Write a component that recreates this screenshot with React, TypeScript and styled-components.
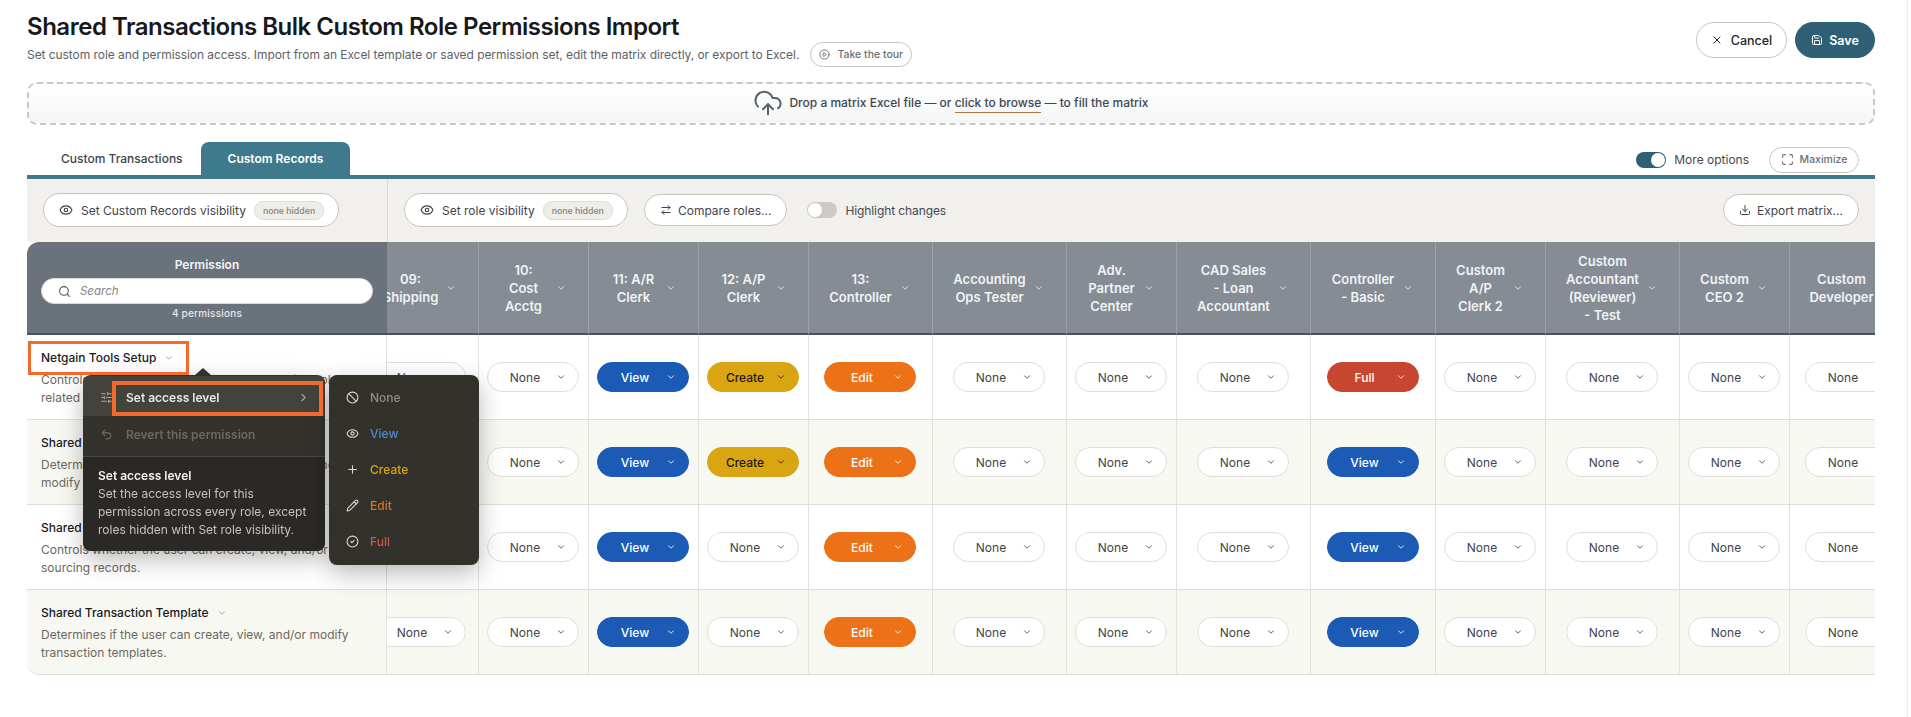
import React, { useLayoutEffect, useRef } from 'react';
import styled, { createGlobalStyle } from 'styled-components';
import {
    Ban, ChevronDown, ChevronRight, CirclePlay, CircleCheck, CloudUpload, Download, Eye,
    ArrowRightLeft, Maximize, Pencil, Plus, Save, Search, SlidersHorizontal, Undo2, X,
} from 'lucide-react';

type Access = 'None' | 'View' | 'Create' | 'Edit' | 'Full';
type ReactIcon = typeof Ban;

const ROLES: { lines: string[]; width: number }[] = [
    { lines: ['09:', 'Shipping'], width: 116 },
    { lines: ['10:', 'Cost', 'Acctg'], width: 110 },
    { lines: ['11: A/R', 'Clerk'], width: 110 },
    { lines: ['12: A/P', 'Clerk'], width: 110 },
    { lines: ['13:', 'Controller'], width: 124 },
    { lines: ['Accounting', 'Ops Tester'], width: 134 },
    { lines: ['Adv.', 'Partner', 'Center'], width: 110 },
    { lines: ['CAD Sales', '- Loan', 'Accountant'], width: 134 },
    { lines: ['Controller', '- Basic'], width: 125 },
    { lines: ['Custom', 'A/P', 'Clerk 2'], width: 110 },
    { lines: ['Custom', 'Accountant', '(Reviewer)', '- Test'], width: 134 },
    { lines: ['Custom', 'CEO 2'], width: 110 },
    { lines: ['Custom', 'Developer'], width: 124 },
];

const PERMISSIONS: { title: string; body: string; levels: Record<number, Access> }[] = [
    {
        title: 'Netgain Tools Setup',
        body: 'Controls whether the user can access Netgain Tools, related setup records.',
        levels: { 2: 'View', 3: 'Create', 4: 'Edit', 8: 'Full' },
    },
    {
        title: 'Shared Transaction Approval',
        body: 'Determines if the user can create, view, submit, and/or modify shared approvals.',
        levels: { 2: 'View', 3: 'Create', 4: 'Edit', 8: 'View' },
    },
    {
        title: 'Shared Transaction Sourcing',
        body: 'Controls whether the user can create, view, and/or sourcing records.',
        levels: { 2: 'View', 4: 'Edit', 8: 'View' },
    },
    {
        title: 'Shared Transaction Template',
        body: 'Determines if the user can create, view, and/or modify transaction templates.',
        levels: { 2: 'View', 4: 'Edit', 8: 'View' },
    },
];

const ACCESS_STYLE: Record<Access, { bg: string; fg: string; line: string; menu: string }> = {
    None: { bg: '#ffffff', fg: '#3f444b', line: '#e0ded8', menu: '#8f8d87' },
    View: { bg: '#1b5ab5', fg: '#ffffff', line: '#1b5ab5', menu: '#4f8ad0' },
    Create: { bg: '#d9a512', fg: '#1d1a10', line: '#d9a512', menu: '#d9a514' },
    Edit: { bg: '#ec7117', fg: '#ffffff', line: '#ec7117', menu: '#e0701c' },
    Full: { bg: '#c74632', fg: '#ffffff', line: '#c74632', menu: '#c8574a' },
};

const ACCESS_ICONS: { level: Access; icon: ReactIcon }[] = [
    { level: 'None', icon: Ban },
    { level: 'View', icon: Eye },
    { level: 'Create', icon: Plus },
    { level: 'Edit', icon: Pencil },
    { level: 'Full', icon: CircleCheck },
];

export default function App() {
    const scroller = useRef<HTMLDivElement>(null);

    useLayoutEffect(() => {
        if (scroller.current) scroller.current.scrollLeft = 24;
    }, []);

    return <Page>
        <GlobalStyle />
        <Header>
            <div>
                <Title>Shared Transactions Bulk Custom Role Permissions Import</Title>
                <SubRow>
                    <Subtitle>Set custom role and permission access. Import from an Excel template or saved permission set, edit the matrix directly, or export to Excel.</Subtitle>
                    <TourButton><CirclePlay size={11} /> Take the tour</TourButton>
                </SubRow>
            </div>
            <Actions>
                <CancelButton><X size={12} /> Cancel</CancelButton>
                <SaveButton><Save size={12} /> Save</SaveButton>
            </Actions>
        </Header>

        <DropZone>
            <CloudUpload size={30} strokeWidth={1.6} color="#56616e" />
            <span>Drop a matrix Excel file — or <BrowseLink>click to browse</BrowseLink> — to fill the matrix</span>
        </DropZone>

        <TabRow>
            <TabList>
                <Tab>Custom Transactions</Tab>
                <Tab $active>Custom Records</Tab>
            </TabList>
            <TabTools>
                <Toggle $on />
                <ToggleLabel>More options</ToggleLabel>
                <MaximizeButton><Maximize size={13} /> Maximize</MaximizeButton>
            </TabTools>
        </TabRow>

        <Toolbar>
            <ToolbarLeft>
                <VisibilityButton>
                    <Eye size={14} /> Set Custom Records visibility <Chip>none hidden</Chip>
                </VisibilityButton>
            </ToolbarLeft>
            <ToolbarRight>
                <VisibilityButton>
                    <Eye size={14} /> Set role visibility <Chip>none hidden</Chip>
                </VisibilityButton>
                <ToolButton><ArrowRightLeft size={12} /> Compare roles...</ToolButton>
                <HighlightToggle>
                    <Toggle />
                    <ToggleLabel>Highlight changes</ToggleLabel>
                </HighlightToggle>
                <ExportButton><Download size={12} /> Export matrix...</ExportButton>
            </ToolbarRight>
        </Toolbar>

        <MatrixArea>
            <Scroller ref={scroller}>
                <Matrix>
                    <colgroup>
                        <col width={360} />
                        {ROLES.map(role => <col key={role.lines.join()} width={role.width} />)}
                    </colgroup>
                    <thead>
                        <tr>
                            <PermissionHead>
                                <PermissionTitle>Permission</PermissionTitle>
                                <SearchBox>
                                    <Search size={13} color="#555" />
                                    <SearchInput placeholder="Search" readOnly />
                                </SearchBox>
                                <PermissionCount>4 permissions</PermissionCount>
                            </PermissionHead>
                            {ROLES.map(role => <RoleHead key={role.lines.join()}>
                                <RoleInner>
                                    <RoleLabel>
                                        {role.lines.map(line => <div key={line}>{line}</div>)}
                                    </RoleLabel>
                                    <ChevronDown size={10} />
                                </RoleInner>
                            </RoleHead>)}
                        </tr>
                    </thead>
                    <tbody>
                        {PERMISSIONS.map((permission, row) => <tr key={permission.title}>
                            <PermissionCell $alt={row % 2 === 1} $last={row === PERMISSIONS.length - 1}>
                                <PermissionName>
                                    {permission.title} <ChevronDown size={10} color="#9a9a94" />
                                </PermissionName>
                                <PermissionBody>{permission.body}</PermissionBody>
                            </PermissionCell>
                            {ROLES.map((role, col) => {
                                const level = permission.levels[col] || 'None';
                                return <LevelCell key={role.lines.join()} $alt={row % 2 === 1}>
                                    <LevelPill $level={level}>
                                        <PillLabel>{level}</PillLabel>
                                        <ChevronDown size={10} />
                                    </LevelPill>
                                </LevelCell>;
                            })}
                        </tr>)}
                    </tbody>
                </Matrix>
            </Scroller>

            <Callout $left={1} $top={99} $width={161} $height={34} $thick={3} />

            <Popover>
                <Menu>
                    <MenuItem $active>
                        <SlidersHorizontal size={13} />
                        <span>Set access level</span>
                        <ChevronRight size={13} />
                    </MenuItem>
                    <MenuItem $disabled>
                        <Undo2 size={13} />
                        <span>Revert this permission</span>
                    </MenuItem>
                    <MenuTip>
                        <TipTitle>Set access level</TipTitle>
                        Set the access level for this permission across every role, except roles hidden with Set role visibility.
                    </MenuTip>
                </Menu>
                <SubMenu>
                    {ACCESS_ICONS.map(({ level, icon: Icon }) => <SubMenuItem key={level} $level={level}>
                        <Icon size={13} color="#dcdad5" />
                        <span>{level}</span>
                    </SubMenuItem>)}
                </SubMenu>
            </Popover>

            <Callout $left={85} $top={139} $width={211} $height={35} $thick={4} />
        </MatrixArea>
    </Page>;
}

const GlobalStyle = createGlobalStyle`
    html, body {
        margin: 0;
        background: #ffffff;
    }
    body {
        font-family: Inter, "Liberation Sans", sans-serif;
        font-size: 12px;
        color: #3f444b;
    }
`

const Page = styled.div`
    box-sizing: border-box;
    width: 1908px;
    height: 717px;
    overflow: hidden;
    padding: 13px 32px 0 27px;
    border-right: 1px solid #ececec;
`

const Header = styled.header`
    display: flex;
    justify-content: space-between;
    align-items: flex-start;
`

const Title = styled.h1`
    margin: 0;
    font-size: 24px;
    line-height: 28px;
    font-weight: 600;
    letter-spacing: -0.02em;
    color: #17191c;
`

const SubRow = styled.div`
    display: flex;
    align-items: center;
    gap: 11px;
    margin-top: 1px;
`

const Subtitle = styled.p`
    margin: 0;
    font-size: 12px;
    line-height: 18px;
    letter-spacing: -0.06px;
    color: #5d6167;
`

const PillButton = styled.button`
    display: inline-flex;
    align-items: center;
    box-sizing: border-box;
    background: #ffffff;
    border: 1px solid #c9c5bd;
    border-radius: 999px;
    font: inherit;
    color: #3f444b;
    white-space: nowrap;
    padding: 0;
`

const TourButton = styled(PillButton)`
    height: 25px;
    width: 102px;
    justify-content: center;
    gap: 7px;
    font-size: 10.5px;
    font-weight: 500;
    color: #6b6f74;
`

const Actions = styled.div`
    display: flex;
    gap: 8px;
    margin-top: 9px;
`

const CancelButton = styled(PillButton)`
    height: 36px;
    width: 91px;
    justify-content: center;
    gap: 8px;
    font-size: 12.5px;
    font-weight: 500;
    color: #22262b;
`

const SaveButton = styled(PillButton)`
    height: 36px;
    width: 80px;
    justify-content: center;
    gap: 6px;
    font-size: 12.5px;
    font-weight: 600;
    color: #ffffff;
    background: #2f5f75;
    border-color: #2f5f75;
`

const DropZone = styled.div`
    display: flex;
    align-items: center;
    justify-content: center;
    gap: 6px;
    box-sizing: border-box;
    height: 43px;
    margin-top: 15px;
    padding-bottom: 2px;
    border: 2px dashed #c8c8c8;
    border-radius: 10px;
    background: linear-gradient(#ffffff, #f4f5f5);
    font-weight: 500;
    color: #3f4650;
`

const BrowseLink = styled.span`
    border-bottom: 1px solid #b0763a;
    padding-bottom: 2px;
`

const TabRow = styled.div`
    display: flex;
    justify-content: space-between;
    height: 33px;
    margin-top: 17px;
`

const TabList = styled.div`
    display: flex;
    padding-left: 15px;
`

const Tab = styled.div<{ $active?: boolean }>`
    display: flex;
    align-items: center;
    padding: ${p => p.$active ? '0 27px' : '0 18px 0 19px'};
    border-radius: 8px 8px 0 0;
    font-weight: ${p => p.$active ? 600 : 500};
    color: ${p => p.$active ? '#ffffff' : '#3f444b'};
    background: ${p => p.$active ? '#3f7a8c' : 'transparent'};
`

const TabTools = styled.div`
    display: flex;
    align-items: center;
    padding: 2px 16px 0 0;
`

const Toggle = styled.span<{ $on?: boolean }>`
    position: relative;
    display: block;
    width: 30px;
    height: 16px;
    border-radius: 8px;
    background: ${p => p.$on ? '#2f5f75' : '#cfcbc4'};

    &::after {
        content: '';
        position: absolute;
        top: 1px;
        left: ${p => p.$on ? 15 : 1}px;
        width: 14px;
        height: 14px;
        border-radius: 50%;
        background: #ffffff;
    }
`

const ToggleLabel = styled.span`
    margin-left: 8px;
    color: #45494f;
`

const MaximizeButton = styled(PillButton)`
    height: 26px;
    width: 90px;
    margin-left: 20px;
    justify-content: center;
    gap: 6px;
    font-size: 10.5px;
    font-weight: 500;
    color: #6b6f74;
`

const Toolbar = styled.div`
    display: flex;
    box-sizing: border-box;
    height: 67px;
    border-top: 4px solid #3f7a8c;
    background: #f2f0ec;
`

const ToolbarLeft = styled.div`
    display: flex;
    align-items: center;
    box-sizing: border-box;
    width: 361px;
    padding: 0 0 1px 16px;
    border-right: 1px solid #dedbd4;
`

const ToolbarRight = styled.div`
    flex: 1;
    display: flex;
    align-items: center;
    gap: 16px;
    padding: 0 16px 1px;
`

const ToolButton = styled(PillButton)`
    height: 32px;
    padding: 0 15px;
    gap: 6px;
`

const VisibilityButton = styled(ToolButton)`
    height: 34px;
    padding: 0 14px 0 15px;
    gap: 8px;
`

const Chip = styled.span`
    display: inline-flex;
    align-items: center;
    height: 17px;
    padding: 0 8px;
    border: 1px solid #e0ddd5;
    border-radius: 9px;
    background: #efede8;
    font-size: 8.8px;
    font-weight: 500;
    color: #85827b;
`

const HighlightToggle = styled.div`
    display: flex;
    align-items: center;
    margin-left: 4px;
    letter-spacing: -0.1px;
    color: #45494f;
`

const ExportButton = styled(ToolButton)`
    margin-left: auto;
`

const MatrixArea = styled.div`
    position: relative;
`

const Scroller = styled.div`
    overflow: hidden;
    width: 100%;
`

const Matrix = styled.table`
    table-layout: fixed;
    width: 1911px;
    border-collapse: separate;
    border-spacing: 0;
`

const PermissionHead = styled.th`
    position: sticky;
    left: 0;
    z-index: 2;
    box-sizing: border-box;
    height: 93px;
    padding: 0 14px;
    background: #6a727b;
    border-bottom: 2px solid #4b5157;
    border-top-left-radius: 12px;
    vertical-align: top;
`

const PermissionTitle = styled.div`
    margin-top: 14px;
    font-size: 12px;
    line-height: 18px;
    font-weight: 600;
    color: #f4f5f6;
`

const SearchBox = styled.div`
    display: flex;
    align-items: center;
    gap: 9px;
    box-sizing: border-box;
    height: 26px;
    margin-top: 4px;
    padding: 0 10px 0 16px;
    width: 332px;
    background: #ffffff;
    border: 1px solid #d9dbde;
    border-radius: 13px;
`

const SearchInput = styled.input`
    flex: 1;
    min-width: 0;
    border: 0;
    outline: 0;
    padding: 0;
    background: transparent;
    font: italic 400 11.5px Inter, "Liberation Sans", sans-serif;

    &::placeholder {
        color: #85878a;
    }
`

const PermissionCount = styled.div`
    margin-top: 1px;
    font-size: 10px;
    line-height: 16px;
    font-weight: 500;
    letter-spacing: 0.02em;
    color: #e6e8ea;
`

const RoleHead = styled.th`
    box-sizing: border-box;
    height: 93px;
    padding: 0;
    background: #868c94;
    border-right: 1px solid #9aa0a7;
    border-bottom: 2px solid #4b5157;
    color: #f1f3f4;
`

const RoleInner = styled.div`
    display: flex;
    align-items: center;
    padding: 0 22px 0 12px;
`

const RoleLabel = styled.div`
    flex: 1;
    min-width: 0;
    font-size: 13px;
    line-height: 18px;
    font-weight: 600;
    text-align: center;
    white-space: nowrap;
`

const PermissionCell = styled.td<{ $alt: boolean; $last: boolean }>`
    position: sticky;
    left: 0;
    z-index: 1;
    box-sizing: border-box;
    height: 85px;
    padding: 14px 14px 0;
    vertical-align: top;
    background: ${p => p.$alt ? '#f8f8f3' : '#ffffff'};
    border-right: 1px solid #e3e1db;
    border-bottom: 1px solid #e0ded6;
    border-bottom-left-radius: ${p => p.$last ? 12 : 0}px;
`

const PermissionName = styled.div`
    display: flex;
    align-items: center;
    gap: 8px;
    font-size: 12px;
    line-height: 18px;
    font-weight: 500;
    color: #191b1e;
`

const PermissionBody = styled.div`
    width: 310px;
    margin-top: 4px;
    font-size: 12px;
    line-height: 18px;
    color: #6b6860;
`

const LevelCell = styled.td<{ $alt: boolean }>`
    box-sizing: border-box;
    height: 85px;
    padding: 0 1px 0 0;
    background: ${p => p.$alt ? '#f8f8f3' : '#ffffff'};
    border-right: 1px solid #e3e1db;
    border-bottom: 1px solid #e0ded6;
`

const LevelPill = styled.div<{ $level: Access }>`
    display: flex;
    align-items: center;
    box-sizing: border-box;
    width: 92px;
    height: 30px;
    margin: 0 auto;
    padding: 0 12px 0 6px;
    border: 1px solid ${p => ACCESS_STYLE[p.$level].line};
    border-radius: 15px;
    background: ${p => ACCESS_STYLE[p.$level].bg};
    color: ${p => ACCESS_STYLE[p.$level].fg};
    font-weight: ${p => p.$level === 'None' ? 400 : 500};
`

const PillLabel = styled.span`
    flex: 1;
    text-align: center;
`

const Callout = styled.div<{ $left: number; $top: number; $width: number; $height: number; $thick: number }>`
    position: absolute;
    z-index: 6;
    box-sizing: border-box;
    left: ${p => p.$left}px;
    top: ${p => p.$top}px;
    width: ${p => p.$width}px;
    height: ${p => p.$height}px;
    border: ${p => p.$thick}px solid #f26a2c;
    pointer-events: none;
`

const Popover = styled.div`
    position: absolute;
    z-index: 5;
    left: 56px;
    top: 133px;
    display: flex;
    align-items: flex-start;
    gap: 4px;

    &::before {
        content: '';
        position: absolute;
        top: -7px;
        left: 112px;
        border-left: 8px solid transparent;
        border-right: 8px solid transparent;
        border-bottom: 7px solid #33312c;
    }
`

const Menu = styled.div`
    width: 242px;
    padding-top: 1px;
    border-radius: 8px;
    overflow: hidden;
    background: #33312c;
    box-shadow: 0 8px 24px rgba(0, 0, 0, .28);
`

const MenuItem = styled.div<{ $active?: boolean; $disabled?: boolean }>`
    display: flex;
    align-items: center;
    gap: 13px;
    box-sizing: border-box;
    height: ${p => p.$active ? 40 : 36}px;
    padding: ${p => p.$active ? '3px' : '0'} 15px 0 17px;
    font-weight: 600;
    background: ${p => p.$active ? '#44423c' : 'transparent'};
    color: ${p => p.$disabled ? '#6b6963' : '#e9e7e2'};

    svg {
        color: ${p => p.$disabled ? '#6b6963' : '#a9a7a1'};
    }

    span {
        flex: 1;
    }
`

const MenuTip = styled.div`
    margin-top: 4px;
    padding: 10px 15px 12px;
    border-top: 1px solid #4a4841;
    background: #2b2925;
    line-height: 18px;
    color: #c5c2bb;
`

const TipTitle = styled.div`
    font-weight: 600;
    color: #f4f2ee;
`

const SubMenu = styled.div`
    width: 150px;
    padding: 4px 0 6px;
    border-radius: 8px;
    background: #33312c;
    box-shadow: 0 8px 24px rgba(0, 0, 0, .28);
`

const SubMenuItem = styled.div<{ $level: Access }>`
    display: flex;
    align-items: center;
    gap: 11px;
    height: 36px;
    padding-left: 17px;
    font-weight: 500;
    color: ${p => ACCESS_STYLE[p.$level].menu};
`
